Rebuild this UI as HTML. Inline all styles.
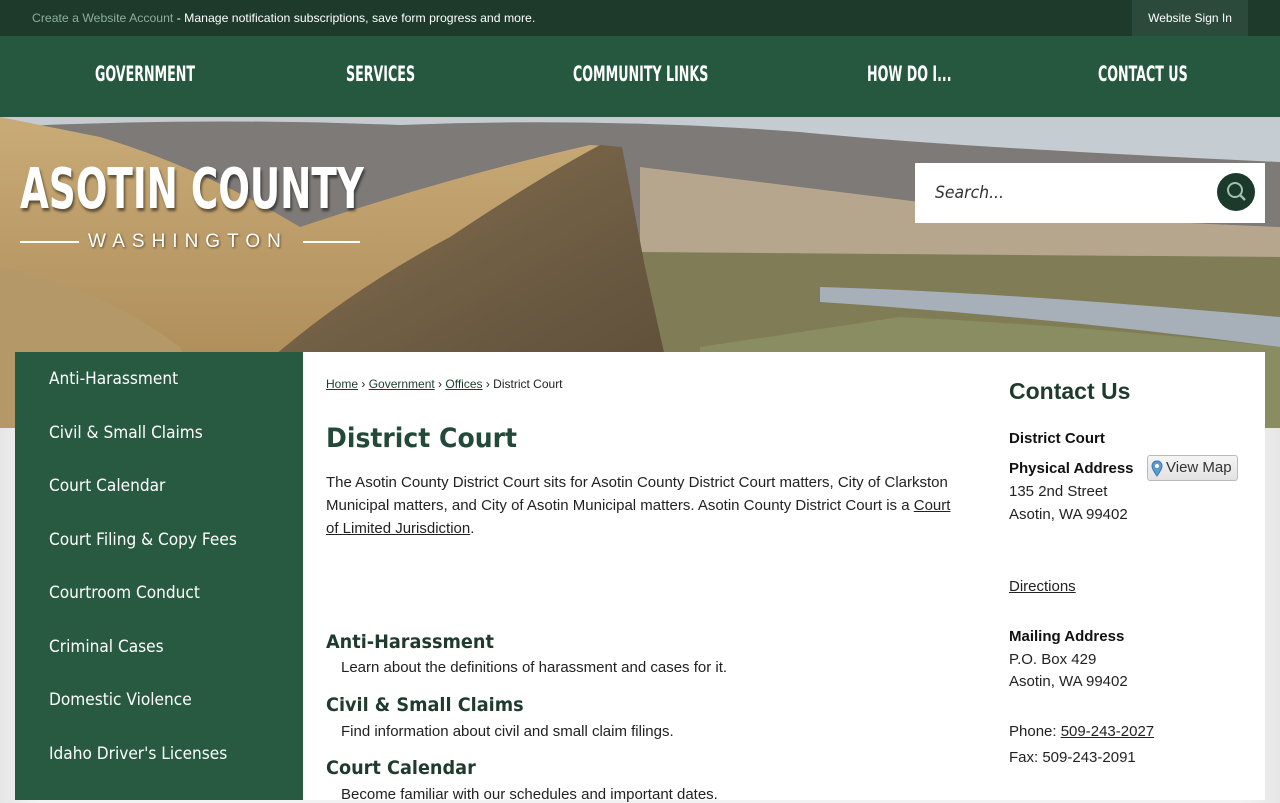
<!DOCTYPE html>
<html><head><meta charset="utf-8">
<style>
*{margin:0;padding:0;box-sizing:border-box}
body{width:1280px;height:800px;overflow:hidden;position:relative;font-family:"Liberation Sans",Arial,sans-serif;background:linear-gradient(90deg,#e6e6e6,#f2f2f2 3%,#f2f2f2 97%,#e6e6e6)}
.a{position:absolute}
#top{left:0;top:0;width:1280px;height:36px;background:#1d3a2b}
#top .t{left:32px;top:11px;font-size:12px;color:#fff;transform:scaleX(1.02);transform-origin:left;white-space:nowrap}
#top .t span{color:#8fae9c}
#sign{left:1132px;top:0;width:116px;height:36px;background:#2c4a3b;color:#fff;font-size:12px;text-align:center;line-height:36px}
#nav{left:0;top:36px;width:1280px;height:81px;background:#265840}
#nav div{position:absolute;top:26px;color:#fff;font-weight:bold;font-size:21px;transform:scaleX(0.67);transform-origin:left;font-family:"DejaVu Sans Condensed","Liberation Sans",sans-serif;white-space:nowrap}
#hero{left:0;top:117px;width:1280px;height:311px;overflow:hidden}
#logo1{left:20px;top:160px;font-family:"DejaVu Sans Condensed","Liberation Sans",sans-serif;font-weight:bold;font-size:56px;color:#fff;transform:scaleX(0.74);transform-origin:left;text-shadow:2px 3px 3px rgba(0,0,0,.5);line-height:60px;white-space:nowrap}
#logo2{left:88px;top:231px;font-size:19px;color:#fff;letter-spacing:7px;text-shadow:1px 1px 2px rgba(0,0,0,.5)}
.ln{height:2px;background:#fff;top:241px}
#search{left:915px;top:163px;width:350px;height:60px;background:#fff}
#search .p{left:20px;top:20px;font-style:italic;font-size:17px;color:#333;font-family:"DejaVu Sans","Liberation Sans",sans-serif;transform:scaleX(0.92);transform-origin:left}
#search .b{left:302px;top:10px;width:38px;height:38px;border-radius:50%;background:#1c3a2b}
#side{left:15px;top:352px;width:288px;height:448px;background:#285a42}
#side div{position:absolute;left:34px;color:#fff;font-size:17px;font-family:"DejaVu Sans","Liberation Sans",sans-serif;transform:scaleX(0.905);transform-origin:left;white-space:nowrap}
#main{left:303px;top:352px;width:962px;height:448px;background:#fff}
.bc{left:326px;top:377px;font-size:12px;color:#222}
.bc u{color:#1e3b2d}
h1{position:absolute;left:326px;top:423px;font-size:27px;color:#22493a;font-family:"DejaVu Sans","Liberation Sans",sans-serif;font-weight:bold;transform:scaleX(0.93);transform-origin:left}
.p1{left:326px;top:471px;width:640px;font-size:15px;line-height:23px;color:#222}
.h2{position:absolute;left:326px;font-size:19px;font-weight:bold;color:#1e3b2d;font-family:"DejaVu Sans","Liberation Sans",sans-serif;transform:scaleX(0.93);transform-origin:left}
.d{position:absolute;left:341px;font-size:15px;color:#222}
.c{position:absolute;left:1009px;font-size:15px;color:#222}
.c b{color:#111}
#vm{left:1147px;top:455px;width:91px;height:26px;border:1px solid #bbb;border-radius:3px;background:linear-gradient(#f5f5f5,#e2e2e2);font-size:15px;color:#333;line-height:24px;padding-left:18px}
</style></head><body>
<div id="top" class="a"><div class="t a"><span>Create a Website Account</span> - Manage notification subscriptions, save form progress and more.</div><div id="sign" class="a">Website Sign In</div></div>
<div id="nav" class="a">
<div style="left:95px">GOVERNMENT</div><div style="left:346px">SERVICES</div><div style="left:573px">COMMUNITY LINKS</div><div style="left:867px">HOW DO I...</div><div style="left:1098px">CONTACT US</div>
</div>
<div id="hero" class="a">
<svg width="1280" height="311" viewBox="0 0 1280 311">
<defs>
<linearGradient id="sky" x1="0" y1="0" x2="0" y2="1"><stop offset="0" stop-color="#c4ccd2"/><stop offset="1" stop-color="#d4d6d4"/></linearGradient>
<linearGradient id="rock" x1="0" y1="0" x2="1" y2="1"><stop offset="0" stop-color="#8a7350"/><stop offset=".6" stop-color="#6b5a42"/><stop offset="1" stop-color="#5a4b36"/></linearGradient>
<linearGradient id="tan" x1="0" y1="0" x2="0" y2="1"><stop offset="0" stop-color="#c9ab78"/><stop offset="1" stop-color="#a88652"/></linearGradient>
</defs>
<rect width="1280" height="311" fill="url(#sky)"/>
<path d="M0 10 Q200 0 400 8 Q600 0 800 15 Q950 30 1280 45 L1280 140 Q1100 130 900 135 L600 140 L0 150Z" fill="#7d7a78"/>
<path d="M640 50 Q800 70 1000 95 Q1150 105 1280 110 L1280 150 L640 150Z" fill="#b6a68e"/>
<path d="M640 135 L1280 140 L1280 311 L640 311Z" fill="#7f7c56"/>
<path d="M820 170 Q1000 175 1280 200 L1280 230 Q1050 200 820 185Z" fill="#a7b0b8"/>
<path d="M900 200 Q1100 210 1280 230 L1280 311 L700 311 L700 230Z" fill="#8a8c62"/>
<path d="M0 0 L0 311 L680 311 L660 230 L640 140 L620 30 L590 28 Q450 60 300 110 Q200 50 100 20 Z" fill="url(#tan)"/>
<path d="M200 311 Q300 200 450 120 Q540 60 600 28 L622 30 L645 150 L665 240 L690 311Z" fill="url(#rock)"/>
<path d="M0 150 Q100 170 180 230 L220 311 L0 311Z" fill="#b49868"/>
</svg>
</div>
<div id="logo1" class="a">ASOTIN COUNTY</div>
<div class="a ln" style="left:20px;width:59px"></div>
<div id="logo2" class="a">WASHINGTON</div>
<div class="a ln" style="left:303px;width:57px"></div>
<div id="search" class="a"><div class="p a">Search...</div><div class="b a"><svg width="38" height="38"><circle cx="18" cy="17" r="7" stroke="#9fc2b0" stroke-width="2" fill="none"/><line x1="23" y1="22" x2="28" y2="27" stroke="#9fc2b0" stroke-width="2.4"/></svg></div></div>
<div id="side" class="a">
<div style="top:17px">Anti-Harassment</div><div style="top:71px">Civil &amp; Small Claims</div><div style="top:124px">Court Calendar</div><div style="top:178px">Court Filing &amp; Copy Fees</div><div style="top:231px">Courtroom Conduct</div><div style="top:285px">Criminal Cases</div><div style="top:338px">Domestic Violence</div><div style="top:392px">Idaho Driver's Licenses</div>
</div>
<div id="main" class="a"></div>
<div class="bc a"><u>Home</u> › <u>Government</u> › <u>Offices</u> › District Court</div>
<h1>District Court</h1>
<div class="p1 a">The Asotin County District Court sits for Asotin County District Court matters, City of Clarkston Municipal matters, and City of Asotin Municipal matters. Asotin County District Court is a <u>Court of Limited Jurisdiction</u>.</div>
<div class="h2" style="top:631px">Anti-Harassment</div>
<div class="d" style="top:659px">Learn about the definitions of harassment and cases for it.</div>
<div class="h2" style="top:694px">Civil &amp; Small Claims</div>
<div class="d" style="top:723px">Find information about civil and small claim filings.</div>
<div class="h2" style="top:757px">Court Calendar</div>
<div class="d" style="top:786px">Become familiar with our schedules and important dates.</div>
<div class="c" style="top:378px;font-size:23px;font-weight:bold;color:#1e3b2d">Contact Us</div>
<div class="c" style="top:430px"><b>District Court</b></div>
<div class="c" style="top:460px"><b>Physical Address</b></div>
<div id="vm" class="a"><svg class="a" style="left:3px;top:4px" width="12" height="17"><path d="M6 1 C2.5 1 1 3.5 1 6 C1 9 6 16 6 16 C6 16 11 9 11 6 C11 3.5 9.5 1 6 1Z" fill="#5b9bd5" stroke="#3a77b0"/><circle cx="6" cy="6" r="2" fill="#fff"/></svg>View Map</div>
<div class="c" style="top:483px">135 2nd Street</div>
<div class="c" style="top:506px">Asotin, WA 99402</div>
<div class="c" style="top:578px"><u>Directions</u></div>
<div class="c" style="top:628px"><b>Mailing Address</b></div>
<div class="c" style="top:651px">P.O. Box 429</div>
<div class="c" style="top:673px">Asotin, WA 99402</div>
<div class="c" style="top:723px">Phone: <u>509-243-2027</u></div>
<div class="c" style="top:749px">Fax: 509-243-2091</div>
</body></html>
